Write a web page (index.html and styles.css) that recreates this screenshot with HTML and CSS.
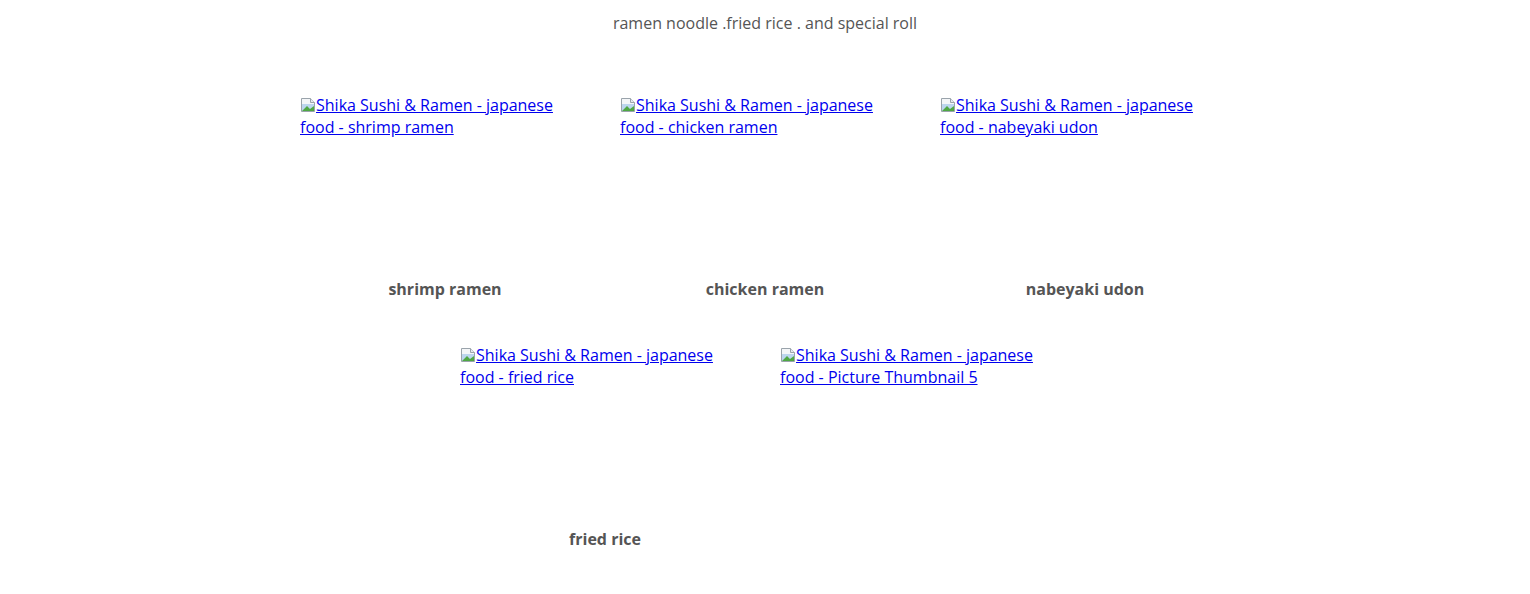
FILE: index.html
```html
<!DOCTYPE html>
<html lang="en">
<head>
<meta charset="utf-8">
<title>Shika Sushi &amp; Ramen</title>
<link rel="stylesheet" href="styles.css">
</head>
<body>
<p class="subtitle">ramen noodle .fried rice . and special roll</p>
<div class="gallery">
  <figure class="item">
    <a class="thumb" href="#"><svg class="broken" viewBox="0 0 16 16" width="16" height="16"><path d="M1.5 1.5h9l4 4v9h-13z" fill="#f4f6f8" stroke="#9aa3ab"/><path d="M10.5 1.5v4h4" fill="#e6e9ec" stroke="#9aa3ab"/><path d="M2 7h12v7H2z" fill="#bcd6ee"/><path d="M2 14l5-5 3 3 4-3v5z" fill="#4fa843"/></svg>Shika Sushi &amp; Ramen - japanese food - shrimp ramen</a>
    <figcaption class="caption">shrimp ramen</figcaption>
  </figure>
  <figure class="item">
    <a class="thumb" href="#"><svg class="broken" viewBox="0 0 16 16" width="16" height="16"><path d="M1.5 1.5h9l4 4v9h-13z" fill="#f4f6f8" stroke="#9aa3ab"/><path d="M10.5 1.5v4h4" fill="#e6e9ec" stroke="#9aa3ab"/><path d="M2 7h12v7H2z" fill="#bcd6ee"/><path d="M2 14l5-5 3 3 4-3v5z" fill="#4fa843"/></svg>Shika Sushi &amp; Ramen - japanese food - chicken ramen</a>
    <figcaption class="caption">chicken ramen</figcaption>
  </figure>
  <figure class="item">
    <a class="thumb" href="#"><svg class="broken" viewBox="0 0 16 16" width="16" height="16"><path d="M1.5 1.5h9l4 4v9h-13z" fill="#f4f6f8" stroke="#9aa3ab"/><path d="M10.5 1.5v4h4" fill="#e6e9ec" stroke="#9aa3ab"/><path d="M2 7h12v7H2z" fill="#bcd6ee"/><path d="M2 14l5-5 3 3 4-3v5z" fill="#4fa843"/></svg>Shika Sushi &amp; Ramen - japanese food - nabeyaki udon</a>
    <figcaption class="caption">nabeyaki udon</figcaption>
  </figure>
  <figure class="item">
    <a class="thumb" href="#"><svg class="broken" viewBox="0 0 16 16" width="16" height="16"><path d="M1.5 1.5h9l4 4v9h-13z" fill="#f4f6f8" stroke="#9aa3ab"/><path d="M10.5 1.5v4h4" fill="#e6e9ec" stroke="#9aa3ab"/><path d="M2 7h12v7H2z" fill="#bcd6ee"/><path d="M2 14l5-5 3 3 4-3v5z" fill="#4fa843"/></svg>Shika Sushi &amp; Ramen - japanese food - fried rice</a>
    <figcaption class="caption">fried rice</figcaption>
  </figure>
  <figure class="item">
    <a class="thumb" href="#"><svg class="broken" viewBox="0 0 16 16" width="16" height="16"><path d="M1.5 1.5h9l4 4v9h-13z" fill="#f4f6f8" stroke="#9aa3ab"/><path d="M10.5 1.5v4h4" fill="#e6e9ec" stroke="#9aa3ab"/><path d="M2 7h12v7H2z" fill="#bcd6ee"/><path d="M2 14l5-5 3 3 4-3v5z" fill="#4fa843"/></svg>Shika Sushi &amp; Ramen - japanese food - Picture Thumbnail 5</a>
    <figcaption class="caption"></figcaption>
  </figure>
</div>
</body>
</html>
```

FILE: styles.css
```css
html, body {
  margin: 0;
  padding: 0;
  background: #ffffff;
}
body {
  font-family: "Open Sans", "Noto Sans", sans-serif;
  font-size: 16px;
  line-height: 22px;
  color: #555555;
}
.subtitle {
  margin: 0;
  padding-top: 12px;
  text-align: center;
  color: #555555;
}
.gallery {
  display: flex;
  flex-wrap: wrap;
  justify-content: center;
  column-gap: 30px;
  row-gap: 44px;
  width: 930px;
  margin: 60px auto 0;
}
.item {
  width: 290px;
  margin: 0;
  display: flex;
  flex-direction: column;
}
.thumb {
  display: block;
  width: 270px;
  height: 176px;
  color: #0000ee;
  text-decoration: underline;
}
.broken {
  display: inline-block;
  vertical-align: -2px;
}
.caption {
  margin-top: 8px;
  height: 22px;
  text-align: center;
  font-weight: 700;
  color: #555555;
}
```
